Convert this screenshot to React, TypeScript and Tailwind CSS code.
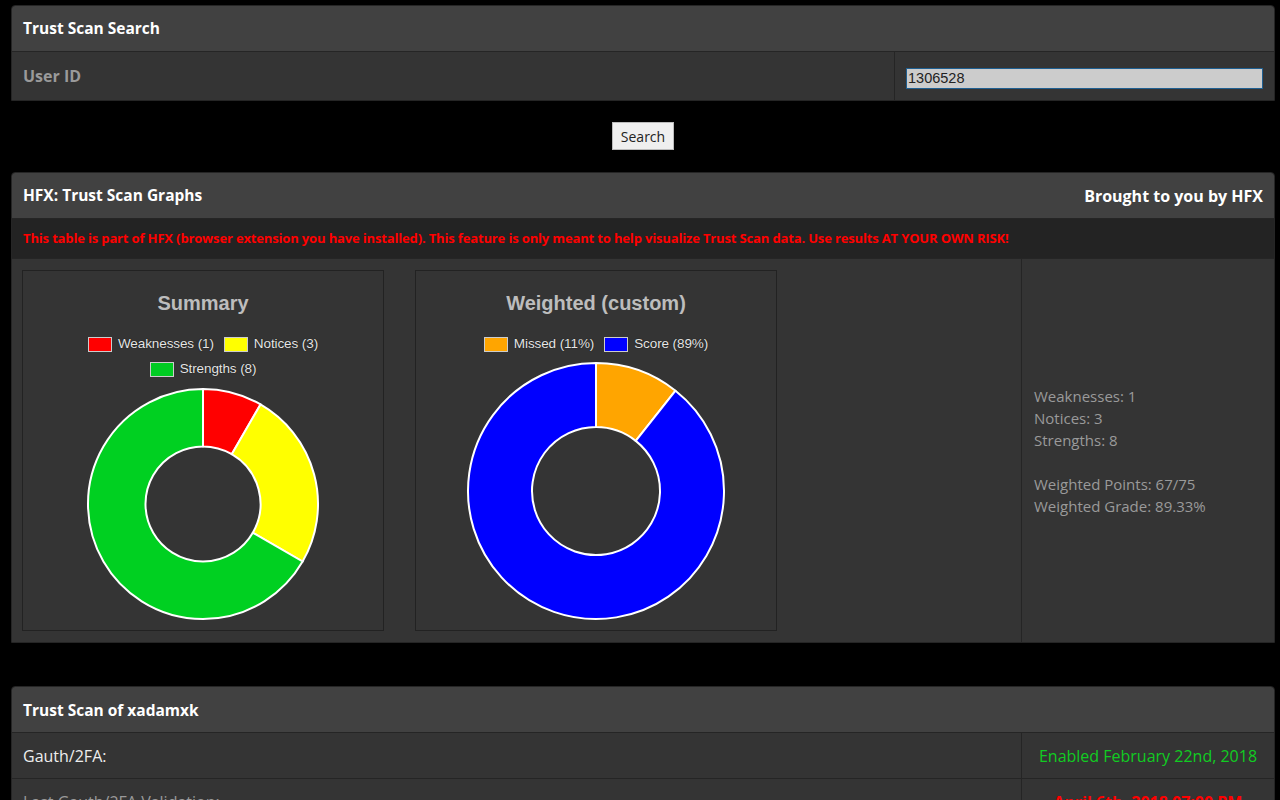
const font = { fontFamily: '"Open Sans", "Noto Sans", sans-serif' };

type Slice = { value: number; color: string };

function arcPath(cx: number, cy: number, R: number, r: number, a0: number, a1: number) {
  const pt = (rad: number, a: number) => [cx + rad * Math.sin(a), cy - rad * Math.cos(a)];
  const large = a1 - a0 > Math.PI ? 1 : 0;
  const [x0, y0] = pt(R, a0);
  const [x1, y1] = pt(R, a1);
  const [x2, y2] = pt(r, a1);
  const [x3, y3] = pt(r, a0);
  return `M${x0} ${y0} A${R} ${R} 0 ${large} 1 ${x1} ${y1} L${x2} ${y2} A${r} ${r} 0 ${large} 0 ${x3} ${y3} Z`;
}

function Donut({ slices, radius }: { slices: Slice[]; radius: number }) {
  const size = radius * 2 + 4;
  const c = size / 2;
  const total = slices.reduce((s, x) => s + x.value, 0);
  let acc = 0;
  return (
    <svg width={size} height={size} viewBox={`0 0 ${size} ${size}`}>
      {slices.map((s, i) => {
        const a0 = (acc / total) * Math.PI * 2;
        acc += s.value;
        const a1 = (acc / total) * Math.PI * 2;
        return (
          <path
            key={i}
            d={arcPath(c, c, radius, radius / 2, a0, a1)}
            fill={s.color}
            stroke="#fff"
            strokeWidth={2}
            strokeLinejoin="round"
          />
        );
      })}
    </svg>
  );
}

function LegendItem({ color, label }: { color: string; label: string }) {
  return (
    <div className="flex items-center gap-[6px]">
      <span className="w-[24px] h-[15px] border border-[#ccc]" style={{ backgroundColor: color }} />
      <span className="text-[13.5px] text-[#e6e6e6] tracking-[-0.1px] [text-shadow:0_0_1px_#000]">{label}</span>
    </div>
  );
}

function ChartBox({ children }: { children: React.ReactNode }) {
  return (
    <div
      className="w-[362px] h-[361px] border border-[#222] flex flex-col items-center"
      style={{ fontFamily: '"Liberation Sans", Arial, sans-serif' }}
    >
      {children}
    </div>
  );
}

export default function App() {
  return (
    <div className="min-h-screen bg-black pt-[5px] pl-[11px] pr-[5px] pb-10" style={font}>
      {/* search panel */}
      <div className="rounded-t-[4px] overflow-hidden border border-[#252525]">
        <div className="h-[46px] bg-[#414141] flex items-center px-[11px] pt-[1px] border-b border-[#252525]">
          <span className="text-white font-bold text-[15.5px]">Trust Scan Search</span>
        </div>
        <div className="h-[48px] bg-[#343434] flex">
          <div className="flex-1 flex items-center px-[11px]">
            <span className="text-[#9a9a9a] font-bold text-[16px]">User ID</span>
          </div>
          <div className="w-[380px] border-l border-[#252525] flex items-center px-[11px] pt-[4px]">
            <input
              defaultValue="1306528"
              className="w-full h-[21px] bg-[#cccccc] border border-[#1f5f91] px-[1px] pt-[1px] text-[14.5px] text-[#222] outline-none"
              style={{ fontFamily: '"Liberation Sans", Arial, sans-serif' }}
            />
          </div>
        </div>
      </div>

      <div className="flex justify-center pt-[21px] pb-[22px]">
        <button className="h-[28px] px-[8px] bg-[#efefef] border border-[#bbb] text-[14px] text-[#222]">
          Search
        </button>
      </div>

      {/* graphs panel */}
      <div className="rounded-t-[4px] overflow-hidden border border-[#252525]">
        <div className="h-[46px] bg-[#414141] flex items-center justify-between px-[11px] border-b border-[#252525]">
          <span className="text-white font-bold text-[15.5px]">HFX: Trust Scan Graphs</span>
          <span className="text-white font-bold text-[16px]">Brought to you by HFX</span>
        </div>
        <div className="h-[40px] bg-[#232323] flex items-center px-[11px] border-b border-[#252525]">
          <span className="text-[#ff0000] font-bold text-[13px] tracking-[-0.15px]">
            This table is part of HFX (browser extension you have installed). This feature is only meant to help
            visualize Trust Scan data. Use results AT YOUR OWN RISK!
          </span>
        </div>
        <div className="bg-[#343434] flex">
          <div className="flex-1 flex gap-[31px] pt-[11px] pb-[11px] px-[10px]">
            <ChartBox>
              <div className="mt-[20px] text-[20px] font-bold text-[#bdbdbd] leading-[24px]">Summary</div>
              <div className="mt-[20px] flex gap-[10px] h-[18px]">
                <LegendItem color="#ff0000" label="Weaknesses (1)" />
                <LegendItem color="#ffff00" label="Notices (3)" />
              </div>
              <div className="mt-[7px] flex h-[18px]">
                <LegendItem color="#00cc22" label="Strengths (8)" />
              </div>
              <div className="mt-[9px]">
                <Donut
                  radius={115}
                  slices={[
                    { value: 1, color: '#ff0000' },
                    { value: 3, color: '#ffff00' },
                    { value: 8, color: '#00d021' },
                  ]}
                />
              </div>
            </ChartBox>
            <ChartBox>
              <div className="mt-[20px] text-[20px] font-bold text-[#bdbdbd] leading-[24px]">Weighted (custom)</div>
              <div className="mt-[20px] flex gap-[10px] h-[18px]">
                <LegendItem color="#ffa500" label="Missed (11%)" />
                <LegendItem color="#0000ff" label="Score (89%)" />
              </div>
              <div className="mt-[8px]">
                <Donut
                  radius={128}
                  slices={[
                    { value: 8, color: '#ffa500' },
                    { value: 67, color: '#0000ff' },
                  ]}
                />
              </div>
            </ChartBox>
          </div>
          <div className="w-[253px] border-l border-[#252525] flex flex-col justify-center px-[12px] text-[15px] leading-[22px] text-[#9a9a9a]">
            <div>Weaknesses: 1</div>
            <div>Notices: 3</div>
            <div>Strengths: 8</div>
            <div className="h-[22px]" />
            <div>Weighted Points: 67/75</div>
            <div>Weighted Grade: 89.33%</div>
          </div>
        </div>
      </div>

      {/* trust scan panel */}
      <div className="mt-[43px] rounded-t-[4px] overflow-hidden border border-[#252525]">
        <div className="h-[46px] bg-[#414141] flex items-center px-[11px] pt-[2px] border-b border-[#252525]">
          <span className="text-white font-bold text-[15.5px]">Trust Scan of xadamxk</span>
        </div>
        <div className="h-[46px] bg-[#343434] flex border-b border-[#252525]">
          <div className="flex-1 flex items-center px-[11px]">
            <span className="text-[#eeeeee] text-[16px]">Gauth/2FA:</span>
          </div>
          <div className="w-[253px] border-l border-[#252525] flex items-center justify-center">
            <span className="text-[#11cc22] text-[16px]">Enabled February 22nd, 2018</span>
          </div>
        </div>
        <div className="h-[46px] bg-[#343434] flex border-b border-[#252525]">
          <div className="flex-1 flex items-center px-[11px]">
            <span className="text-[#9a9a9a] text-[16px]">Last Gauth/2FA Validation:</span>
          </div>
          <div className="w-[253px] border-l border-[#252525] flex items-center justify-center">
            <span className="text-[#ff0000] font-bold text-[16px]">April 6th, 2018 07:00 PM</span>
          </div>
        </div>
      </div>
    </div>
  );
}
